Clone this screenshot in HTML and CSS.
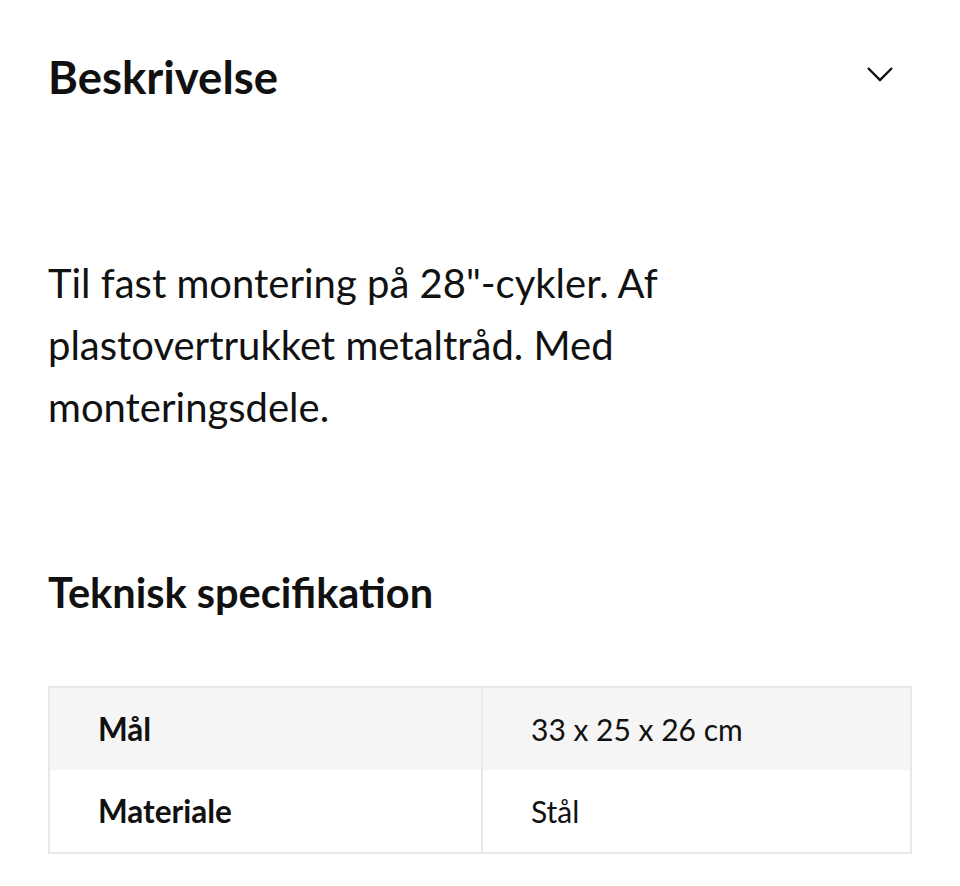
FILE: index.html
```html
<!DOCTYPE html>
<html lang="da">
<head>
<meta charset="utf-8">
<link rel="stylesheet" href="styles.css">
</head>
<body>
<main class="page">
  <div class="acc-head">
    <h2 class="acc-title">Beskrivelse</h2>
    <svg class="chev" width="28" height="18" viewBox="0 0 28 18"><path d="M2 3 L14 15 L26 3" fill="none" stroke="#111" stroke-width="2.4"/></svg>
  </div>
  <p class="desc">Til fast montering på 28"-cykler. Af plastovertrukket metaltråd. Med monteringsdele.</p>
  <h3 class="spec-title">Teknisk specifikation</h3>
  <table class="spec">
    <tr class="shade"><th>Mål</th><td>33 x 25 x 26 cm</td></tr>
    <tr><th>Materiale</th><td>Stål</td></tr>
  </table>
</main>
</body>
</html>
```
FILE: styles.css
```css
html, body { margin: 0; background: #fff; }
body { font-family: Lato, "Open Sans", sans-serif; color: #111; }
.page { padding: 0 48px; }
.acc-head { display: flex; justify-content: space-between; align-items: center; height: 152px; }
.acc-title { margin: 0; font-size: 45.5px; font-weight: 700; }
.chev { margin-right: 18px; margin-bottom: 4px; }
.desc { margin: 100px 0 0; font-size: 40px; line-height: 62px; max-width: 640px; }
.spec-title { margin: 129px 0 0; font-size: 41.5px; font-weight: 700; }
.spec { margin-top: 69px; width: 100%; border-collapse: collapse; border: 2px solid #e8e8e8; }
.spec th, .spec td { height: 82px; text-align: left; padding: 0 0 0 48px; }
.spec th { font-size: 31.5px; font-weight: 700; width: 383px; border-right: 2px solid #e8e8e8; }
.spec td { font-size: 30px; font-weight: 400; }
.shade { background: #f5f5f5; }
```
